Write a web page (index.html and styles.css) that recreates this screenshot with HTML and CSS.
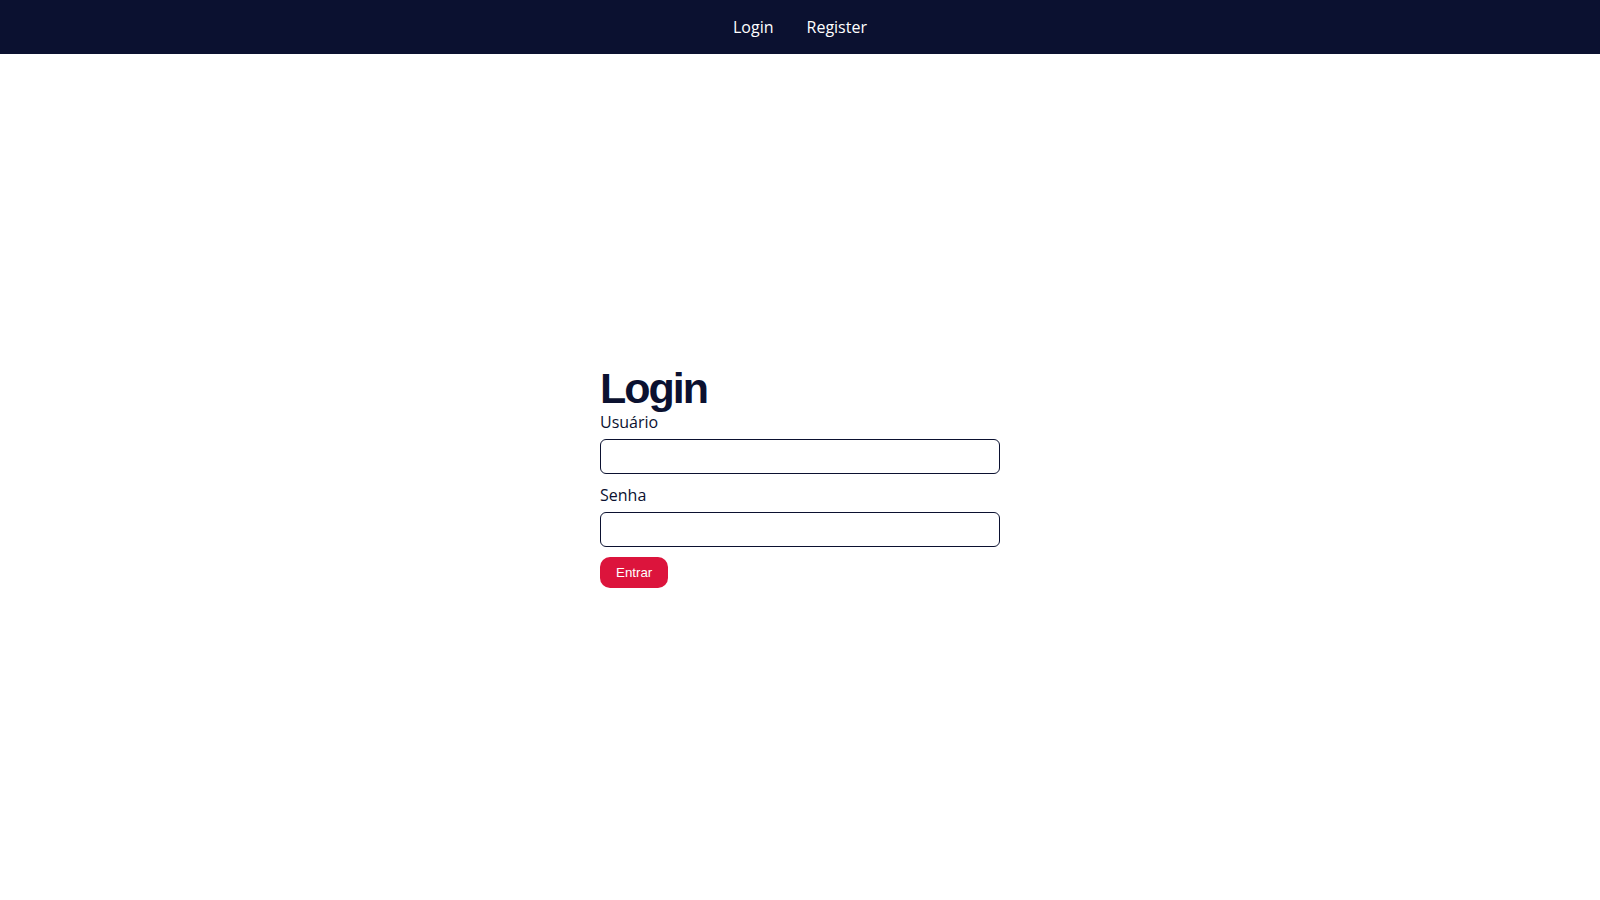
FILE: index.html
```html
<!DOCTYPE html>
<html>
<head>
    <title>Login</title>
    <link rel="stylesheet" href="styles.css">
</head>
<body>
    <nav class="navbar">
        <a href="#" class="nav-link">Login</a>
        <a href="#" class="nav-link">Register</a>
    </nav>

    <main class="page">
        <form class="login-form">
            <h1>Login</h1>
            <label for="user">Usuário</label>
            <input type="text" id="user">
            <label for="pass">Senha</label>
            <input type="password" id="pass">
            <button type="submit">Entrar</button>
        </form>
    </main>
</body>
</html>
```

FILE: styles.css
```css
body {
    margin: 0;
    font-family: "Open Sans", sans-serif;
    color: #0b1130;
    background: white;
    min-height: 100vh;
    display: flex;
    flex-direction: column;
}
.navbar {
    height: 54px;
    background: #0b1130;
    display: flex;
    justify-content: center;
    align-items: center;
    gap: 33px;
}
.nav-link {
    color: white;
    text-decoration: none;
    font-size: 16px;
    line-height: 22px;
}
.page {
    flex: 1;
    display: flex;
    justify-content: center;
    align-items: center;
}
.login-form {
    width: 400px;
    display: flex;
    flex-direction: column;
    align-items: flex-start;
}
h1 {
    margin: 0;
    font-family: "Liberation Sans", Arial, sans-serif;
    font-size: 43px;
    line-height: 44px;
    font-weight: bold;
    letter-spacing: -2px;
}
label {
    font-size: 16px;
    line-height: 22px;
    margin-top: 1px;
    margin-bottom: 6px;
}
input {
    box-sizing: border-box;
    width: 100%;
    height: 35px;
    border: 1px solid #0b1130;
    border-radius: 6px;
    margin-bottom: 9px;
    padding: 0 8px;
    font-size: 16px;
}
button {
    margin-top: 1px;
    background: #dc143c;
    color: white;
    border: none;
    border-radius: 10px;
    font-family: "Liberation Sans", Arial, sans-serif;
    font-size: 13.33px;
    height: 31px;
    padding: 0 16px;
    cursor: pointer;
}
```
